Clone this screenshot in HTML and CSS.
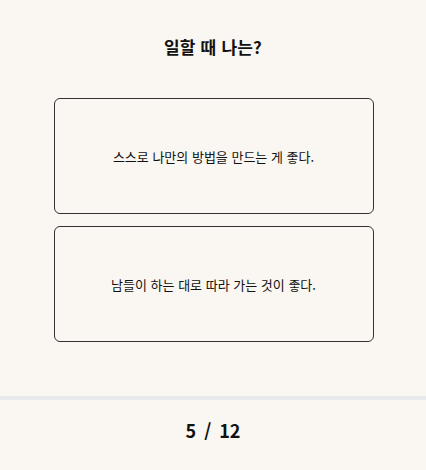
FILE: index.html
```html
<!DOCTYPE html>
<html lang="ko">
<head>
    <meta charset="UTF-8">
    <meta name="viewport" content="width=device-width, initial-scale=1.0">
    <title>일할 때 나는?</title>
    <link rel="stylesheet" href="styles.css">
</head>
<body>

    <div class="page">
        <!-- 질문 -->
        <div class="question">
            <h1>일할 때 나는?</h1>

            <div class="answers">
                <button class="answer">스스로 나만의 방법을 만드는 게 좋다.</button>
                <button class="answer">남들이 하는 대로 따라 가는 것이 좋다.</button>
            </div>
        </div>

        <!-- 진행 상황 -->
        <div class="progress">5 / 12</div>
    </div>

</body>
</html>
```

FILE: styles.css
```css
body {
    font-family: "Noto Sans CJK KR", "Noto Sans", sans-serif;
    margin: 0;
    padding: 0;
    background-color: #faf7f2;
    color: #111;
}

.page {
    height: 100vh;
    display: flex;
    flex-direction: column;
}

.question {
    flex: 1;
    padding-top: 35px;
}

h1 {
    margin: 0;
    text-align: center;
    font-size: 17px;
    font-weight: bold;
    line-height: 24px;
    letter-spacing: 0.2px;
}

.answers {
    width: 320px;
    margin: 39px auto 0;
    padding-left: 1px;
    display: flex;
    flex-direction: column;
    gap: 12px;
}

.answer {
    height: 116px;
    font-family: inherit;
    font-size: 13px;
    color: #111;
    background-color: transparent;
    border: 1px solid #333;
    border-radius: 6px;
    cursor: pointer;
}

.answer:hover {
    background-color: #f3efe7;
}

.progress {
    border-top: 4px solid #e8e9ea;
    box-sizing: border-box;
    height: 74px;
    padding-top: 18px;
    text-align: center;
    font-size: 18px;
    font-weight: bold;
    line-height: 24px;
    word-spacing: 3px;
}
```
